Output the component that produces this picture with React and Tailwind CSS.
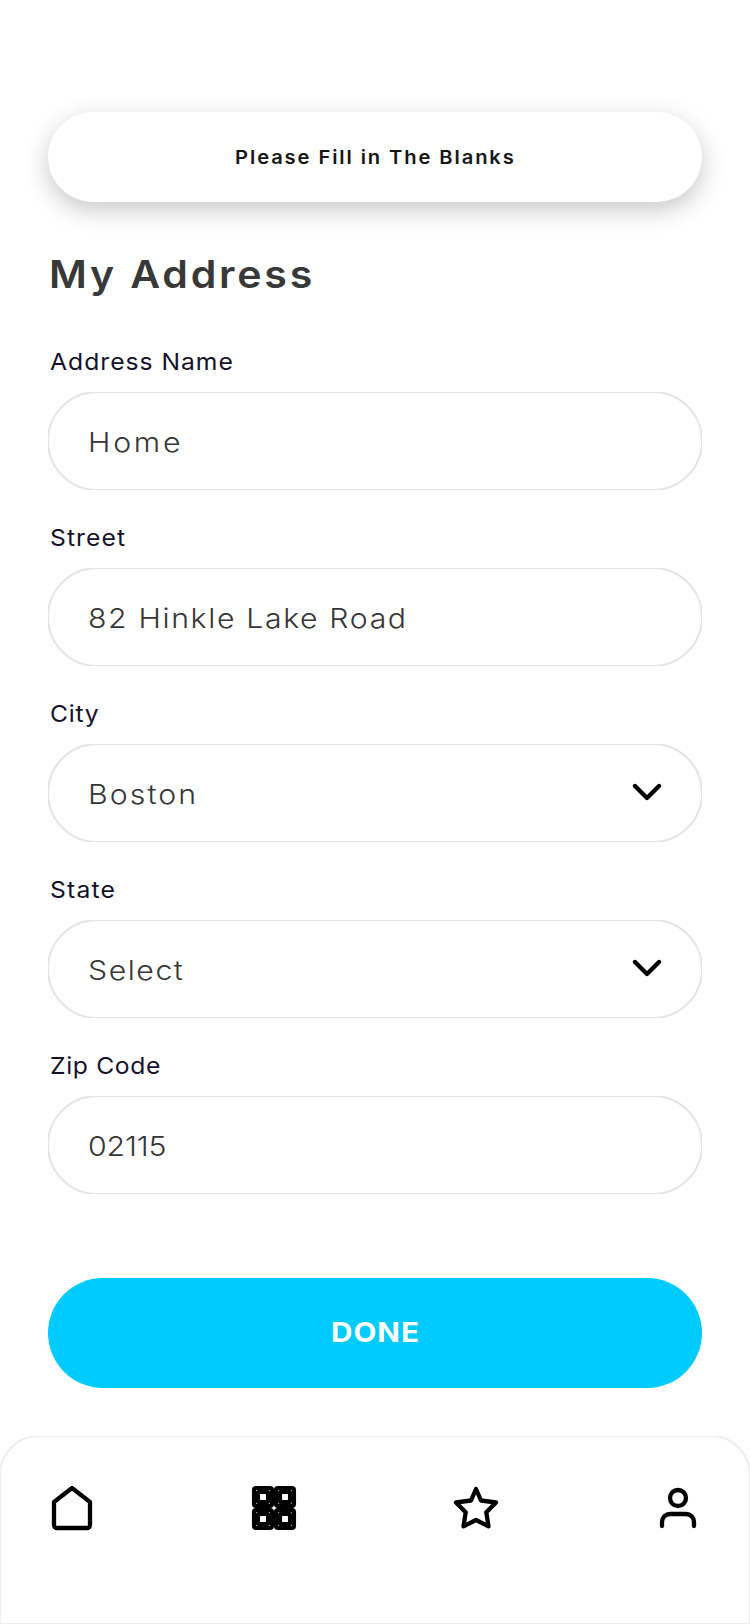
const fields = [
  { label: 'Address Name', value: 'Home', labelClass: 'tracking-[0.93px]', valueClass: 'tracking-[2.5px]' },
  { label: 'Street', value: '82 Hinkle Lake Road', labelClass: 'tracking-[1px]', valueClass: 'tracking-[1.48px]' },
  { label: 'City', value: 'Boston', select: true, labelClass: 'tracking-[0.7px]', valueClass: 'tracking-[1.9px]' },
  { label: 'State', value: 'Select', select: true, labelClass: 'tracking-[1.1px]', valueClass: 'tracking-[1.4px]' },
  { label: 'Zip Code', value: '02115', labelClass: 'tracking-[0.6px]', valueClass: 'tracking-[-0.1px]' },
];

function Chevron() {
  return (
    <svg width="32" height="20" viewBox="0 0 32 20" fill="none" stroke="#000" strokeWidth="4.3" strokeLinecap="round" strokeLinejoin="round">
      <path d="M4 3 16 15 28 3" />
    </svg>
  );
}

function Field({ label, value, select, labelClass, valueClass }) {
  return (
    <div>
      <div className={`h-[30px] origin-left scale-x-105 pt-px pl-[2px] text-[23.5px] leading-[30px] font-[390] text-[#15112b] whitespace-nowrap ${labelClass}`}>{label}</div>
      <div className="mt-4 h-[98px] overflow-hidden">
        <div className="-m-px flex h-[100px] items-center justify-between rounded-full border-2 border-[#e4e4e4] pr-[38px] pl-[39px]">
          <span className={`origin-left scale-x-110 pt-[2px] text-[27.5px] leading-[34px] font-[350] text-[#363636] whitespace-nowrap ${valueClass}`}>{value}</span>
          {select && <Chevron />}
        </div>
      </div>
    </div>
  );
}

function NavIcon({ strokeWidth = 4.3, children }) {
  return (
    <svg width="48" height="48" viewBox="0 0 48 48" fill="none" stroke="#000" strokeWidth={strokeWidth} strokeLinecap="round" strokeLinejoin="round">
      {children}
    </svg>
  );
}

function Tile({ x, y }) {
  return (
    <g transform={`translate(${x} ${y})`}>
      <rect x="2" y="2" width="18" height="18" rx="2" />
      <rect x="6" y="6" width="10" height="10" />
    </g>
  );
}

export default function App() {
  return (
    <div className="flex h-[1624px] w-[750px] flex-col overflow-hidden bg-white font-['Inter','Liberation_Sans',sans-serif]">
      <main className="flex flex-col px-12 pt-[112px]">
        <div className="flex h-[90px] items-center justify-center rounded-full bg-white text-[19px] font-[580] tracking-[1.8px] text-[#161616] shadow-[0_8px_24px_rgba(0,0,0,0.22)]">
          <span className="scale-x-106 pt-[2px] whitespace-nowrap">Please Fill in The Blanks</span>
        </div>
        <h1 className="mt-12 h-12 origin-left scale-x-108 pl-px text-[38px] leading-[48px] font-[580] tracking-[2.6px] whitespace-nowrap text-[#383838]">My Address</h1>
        <div className="mt-12 flex flex-col gap-8">
          {fields.map((f) => (
            <Field key={f.label} {...f} />
          ))}
        </div>
        <button className="mt-[84px] flex h-[110px] items-center justify-center rounded-full bg-[#00cbff] text-[27px] font-bold tracking-[0.9px] text-white">
          <span className="scale-x-110 pl-px">DONE</span>
        </button>
      </main>
      <div className="mt-12 h-[188px] overflow-hidden">
        <nav className="-m-px flex h-[190px] items-start justify-between rounded-t-[40px] border-2 border-[#eeeeee] bg-white px-[47px] pt-[47px]">
          <NavIcon>
            <path d="M24 4 42 18V41a3 3 0 0 1-3 3H9a3 3 0 0 1-3-3V18Z" />
          </NavIcon>
          <NavIcon strokeWidth={4.1}>
            <Tile x={2} y={2} />
            <Tile x={24} y={2} />
            <Tile x={2} y={24} />
            <Tile x={24} y={24} />
          </NavIcon>
          <NavIcon>
            <path d="M24 5 29 16.5 44 18.5 34.3 28.3 36.5 42.3 24 36 11.5 42.3 13.7 28.3 4 18.5 19 16.5Z" />
          </NavIcon>
          <NavIcon>
            <circle cx="24" cy="14" r="8" />
            <path d="M8 42V38a8 8 0 0 1 8-8H32a8 8 0 0 1 8 8V42" />
          </NavIcon>
        </nav>
      </div>
    </div>
  );
}
